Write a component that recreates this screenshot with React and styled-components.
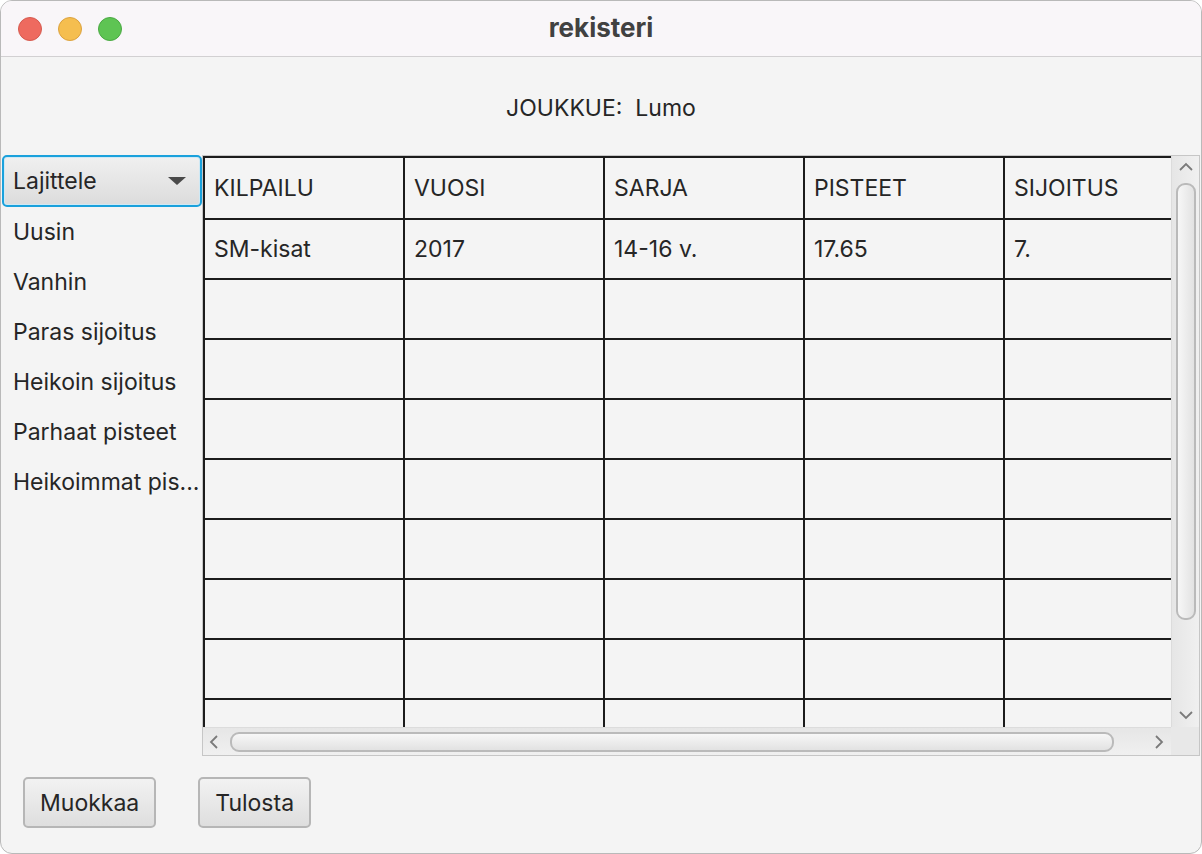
import React from 'react';
import styled, { createGlobalStyle } from 'styled-components';

const GlobalStyle = createGlobalStyle`
  html, body {
    margin: 0;
    padding: 0;
    background: #ffffff;
  }
  * {
    box-sizing: border-box;
  }
`;

const Window = styled.div`
  width: 1202px;
  height: 854px;
  display: flex;
  flex-direction: column;
  background: #f4f4f4;
  border: 1px solid #b9b9b9;
  border-radius: 12px;
  overflow: hidden;
  font-family: Inter, "Liberation Sans", sans-serif;
  color: #262626;
`;

const TitleBar = styled.div`
  height: 56px;
  flex: none;
  display: flex;
  align-items: center;
  position: relative;
  background: #f9f6f9;
  border-bottom: 1px solid #d2d0d2;
`;

const Lights = styled.div`
  display: flex;
  gap: 16px;
  padding-left: 17px;
`;

const Light = styled.span`
  width: 24px;
  height: 24px;
  border-radius: 50%;
  background: ${p => p.color};
  border: 1px solid ${p => p.edge};
`;

const Title = styled.div`
  position: absolute;
  left: 0;
  right: 0;
  padding-bottom: 2px;
  text-align: center;
  font-size: 26px;
  font-weight: 700;
  color: #414141;
  pointer-events: none;
`;

const TeamRow = styled.div`
  height: 98px;
  flex: none;
  display: flex;
  align-items: center;
  justify-content: center;
  font-size: 23px;
  padding-top: 3px;
`;

const Main = styled.div`
  height: 601px;
  flex: none;
  display: flex;
`;

const SortList = styled.div`
  width: 201px;
  flex: none;
  display: flex;
  flex-direction: column;
  padding-left: 1px;
`;

const Combo = styled.div`
  height: 52px;
  display: flex;
  align-items: center;
  justify-content: space-between;
  padding: 0 14px 0 9px;
  border: 2px solid #1aa1dc;
  border-radius: 5px;
  background: linear-gradient(#f0f0f0, #dcdcdc);
  box-shadow: inset 0 0 0 1px #cfe9f5;
  font-size: 23px;
`;

const Caret = styled.span`
  width: 0;
  height: 0;
  border-left: 9px solid transparent;
  border-right: 9px solid transparent;
  border-top: 8px solid #4a4a4a;
`;

const SortItem = styled.div`
  height: 50px;
  display: flex;
  align-items: center;
  padding-left: 11px;
  font-size: 23px;
  white-space: nowrap;
  overflow: hidden;
`;

const ScrollPane = styled.div`
  flex: 1;
  display: grid;
  grid-template-columns: 1fr 28px;
  grid-template-rows: 1fr 28px;
  border: 1px solid #c6c6c6;
  margin-right: 1px;
`;

const Viewport = styled.div`
  overflow: hidden;
`;

const Grid = styled.div`
  display: grid;
  grid-template-columns: repeat(5, 200px);
  border-left: 2px solid #1c1c1c;
  border-top: 2px solid #1c1c1c;
`;

const Cell = styled.div`
  height: ${p => (p.head ? 62 : 60)}px;
  display: flex;
  align-items: center;
  padding-left: 9px;
  font-size: 23px;
  border-right: 2px solid #1c1c1c;
  border-bottom: 2px solid #1c1c1c;
  white-space: nowrap;
  overflow: hidden;
`;

const VBar = styled.div`
  display: flex;
  flex-direction: column;
  align-items: center;
  background: linear-gradient(90deg, #e6e6e6, #f0f0f0);
  border-left: 1px solid #dcdcdc;
`;

const HBar = styled.div`
  display: flex;
  align-items: center;
  background: linear-gradient(#e6e6e6, #f0f0f0);
  border-top: 1px solid #dcdcdc;
`;

const Corner = styled.div`
  background: #e8e8e8;
`;

const Arrow = styled.div`
  width: 24px;
  height: 24px;
  flex: none;
  display: flex;
  align-items: center;
  justify-content: center;
`;

const VThumb = styled.div`
  width: 20px;
  height: 437px;
  margin-top: 3px;
  border: 2px solid #bababa;
  border-radius: 9px;
  background: linear-gradient(90deg, #f7f7f7, #e2e2e2);
`;

const HThumb = styled.div`
  width: 884px;
  height: 20px;
  margin-left: 3px;
  border: 2px solid #bababa;
  border-radius: 9px;
  background: linear-gradient(#f7f7f7, #e2e2e2);
`;

const Spacer = styled.div`
  flex: 1;
`;

const Footer = styled.div`
  flex: 1;
  display: flex;
  align-items: flex-start;
  gap: 42px;
  padding: 21px 0 0 22px;
`;

const Button = styled.button`
  height: 51px;
  padding: 0 15px;
  border: 2px solid #b6b6b6;
  border-radius: 5px;
  background: linear-gradient(#f2f2f2, #dedede);
  font-family: Inter, "Liberation Sans", sans-serif;
  font-size: 23px;
  color: #262626;
`;

const Chevron = ({ dir }) => {
  const d = {
    up: 'M3 11 L9 5 L15 11',
    down: 'M3 6 L9 12 L15 6',
    left: 'M11 3 L5 9 L11 15',
    right: 'M6 3 L12 9 L6 15',
  }[dir];
  return (
    <svg width="18" height="18" viewBox="0 0 18 18">
      <path d={d} fill="none" stroke="#7a7a7a" strokeWidth="1.8" />
    </svg>
  );
};

const headers = ['KILPAILU', 'VUOSI', 'SARJA', 'PISTEET', 'SIJOITUS'];
const rows = [
  ['SM-kisat', '2017', '14-16 v.', '17.65', '7.'],
  ...Array.from({ length: 8 }, () => ['', '', '', '', '']),
];
const sortOptions = [
  'Uusin',
  'Vanhin',
  'Paras sijoitus',
  'Heikoin sijoitus',
  'Parhaat pisteet',
  'Heikoimmat pis...',
];

export default function App() {
  return (
    <>
      <GlobalStyle />
      <Window>
        <TitleBar>
          <Lights>
            <Light color="#ee6a5f" edge="#d65a4f" />
            <Light color="#f5be4f" edge="#dca23f" />
            <Light color="#5ec453" edge="#4aa943" />
          </Lights>
          <Title>rekisteri</Title>
        </TitleBar>
        <TeamRow>JOUKKUE:&nbsp; Lumo</TeamRow>
        <Main>
          <SortList>
            <Combo>
              Lajittele
              <Caret />
            </Combo>
            {sortOptions.map(o => (
              <SortItem key={o}>{o}</SortItem>
            ))}
          </SortList>
          <ScrollPane>
            <Viewport>
              <Grid>
                {headers.map(h => (
                  <Cell key={h} head>{h}</Cell>
                ))}
                {rows.map((r, i) =>
                  r.map((c, j) => <Cell key={i + '-' + j}>{c}</Cell>)
                )}
              </Grid>
            </Viewport>
            <VBar>
              <Arrow><Chevron dir="up" /></Arrow>
              <VThumb />
              <Spacer />
              <Arrow><Chevron dir="down" /></Arrow>
            </VBar>
            <HBar>
              <Arrow><Chevron dir="left" /></Arrow>
              <HThumb />
              <Spacer />
              <Arrow><Chevron dir="right" /></Arrow>
            </HBar>
            <Corner />
          </ScrollPane>
        </Main>
        <Footer>
          <Button>Muokkaa</Button>
          <Button>Tulosta</Button>
        </Footer>
      </Window>
    </>
  );
}
